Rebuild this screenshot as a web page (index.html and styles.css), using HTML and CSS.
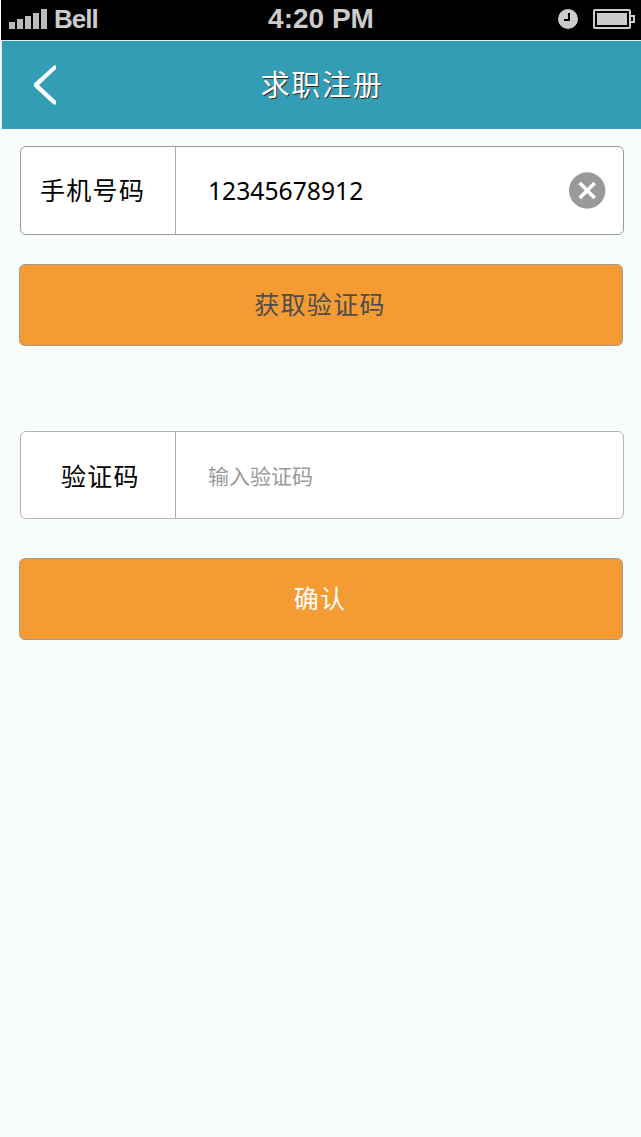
FILE: index.html
```html
<!DOCTYPE html>
<html lang="zh-CN">
<head>
<meta charset="utf-8">
<title>求职注册</title>
<link rel="stylesheet" href="styles.css">
</head>
<body>
<div class="screen">
  <div class="status">
    <div class="carrier">
      <svg class="signal" width="38" height="20" viewBox="0 0 38 20"><path d="M0 13h6v7H0zM8 10h6v10H8zM16 7h6v13h-6zM24 4h6v16h-6zM32 0h6v20h-6z"/></svg>
      <span class="carrier-name">Bell</span>
    </div>
    <span class="time">4:20 PM</span>
    <div class="indicators">
      <svg width="20" height="20" viewBox="0 0 20 20"><circle cx="10" cy="10" r="10"/><path class="hands" d="M11 4v7H6"/></svg>
      <svg width="42" height="20" viewBox="0 0 42 20"><rect class="case" x="1" y="1" width="36" height="18" rx="1"/><path d="M4 4h30v12H4z"/><path class="case tip" d="M38 7h3v6h-3"/></svg>
    </div>
  </div>
  <header class="header">
    <svg class="back" width="26" height="42" viewBox="0 0 26 42"><path d="M22 1.500h2v3.500L7 21L24 37v3.500h-2.500L2 22.500v-3Z"/></svg>
    <h1 class="title">求职注册</h1>
  </header>
  <main class="form">
    <div class="field phone">
      <label class="label">手机号码</label>
      <span class="value">12345678912</span>
      <svg class="clear" width="37" height="37" viewBox="0 0 37 37"><circle cx="18.200" cy="18.500" r="18.200"/><path d="M10.700 11l15 15M25.700 11l-15 15"/></svg>
    </div>
    <button class="button get-code">获取验证码</button>
    <div class="field code">
      <label class="label">验证码</label>
      <span class="hint">输入验证码</span>
    </div>
    <button class="button confirm">确认</button>
  </main>
</div>
</body>
</html>
```

FILE: styles.css
```css
* { box-sizing: border-box; }
body {
  margin: 0;
  background: #f8fcfd;
  font-family: "Noto Sans", "Noto Sans CJK SC", sans-serif;
}
.screen {
  height: 1137px;
  border-left: 1px solid #fff;
  overflow: hidden;
}
.status {
  display: grid;
  grid-template-columns: 1fr auto 1fr;
  align-items: center;
  height: 40px;
  padding: 0 6px 2px 8px;
  background: #000;
  color: #ccc;
  font: bold 26px/38px "Liberation Sans", Arial, sans-serif;
}
.status svg { fill: #ccc; }
.carrier, .indicators { display: flex; align-items: center; }
.carrier { gap: 7px; }
.carrier .signal { fill: #bbb; }
.carrier-name { letter-spacing: -1px; }
.time { padding-right: 2px; font-size: 28px; }
.indicators { justify-content: flex-end; gap: 15px; }
.status .hands { fill: none; stroke: #000; stroke-width: 2; }
.status .case { fill: none; stroke: #ccc; stroke-width: 2; }
.header {
  display: grid;
  grid-template-columns: 60px 1fr 60px;
  align-items: center;
  height: 89px;
  border-top: 1px solid #d9eef2;
  border-left: 1px solid #d9eef2;
  background: #339db5;
}
.back { margin-left: 30px; fill: #fff; }
.title {
  margin: 0;
  padding: 0 0 4px 1px;
  color: #fff;
  font: 400 29px/40px "Noto Sans CJK SC", sans-serif;
  letter-spacing: 1.7px;
  text-align: center;
  text-shadow: 1px 1px 0 #3a2a20;
}
.form {
  display: flex;
  flex-direction: column;
  padding: 17px 17px 0 18px;
}
.field {
  display: flex;
  align-items: center;
  height: 89px;
  margin-left: 1px;
  border: 1px solid #999;
  border-radius: 6px;
  background: #fff;
}
.label {
  display: flex;
  align-items: center;
  align-self: stretch;
  width: 155px;
  padding-left: 19px;
  border-right: 1px solid #aaa;
  color: #000;
  font-size: 25px;
  letter-spacing: 1.3px;
}
.phone .label { padding-bottom: 3px; }
.value {
  flex: 1;
  padding-left: 32px;
  color: #000;
  font-size: 24.7px;
}
.clear { margin-right: 17px; fill: #999; }
.clear path { fill: none; stroke: #fff; stroke-width: 3.600; }
.button {
  height: 82px;
  margin: 29px 1px 0 0;
  padding: 0 2px 4px 0;
  border: 1px solid #a39c90;
  border-radius: 6px;
  background: #f59b33;
  font: 25px/36px "Noto Sans CJK SC", sans-serif;
  letter-spacing: 1.3px;
}
.get-code { color: #4d4d4d; }
.code { height: 88px; margin-top: 85px; border-color: #b4b4b4; }
.code .label { padding-left: 40px; padding-bottom: 1px; }
.hint {
  padding-left: 32px;
  color: #999;
  font-size: 21px;
}
.confirm { margin-top: 39px; color: #fff; }
```
